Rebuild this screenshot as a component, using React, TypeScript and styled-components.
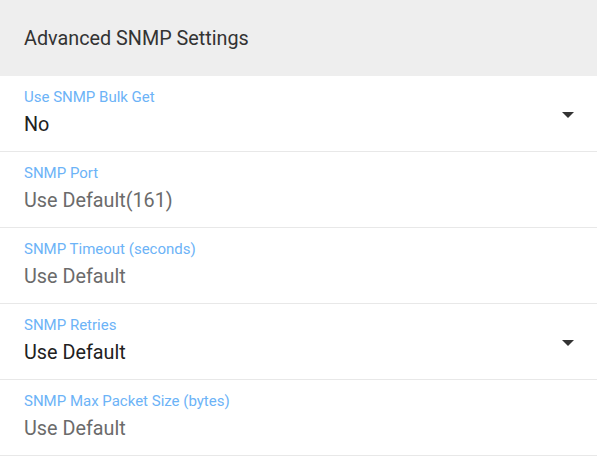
import styled, { createGlobalStyle } from "styled-components";

const GlobalStyle = createGlobalStyle`
  html, body {
    margin: 0;
    padding: 0;
    background: #ffffff;
    font-family: Roboto, "Liberation Sans", Arial, sans-serif;
  }
`;

const Panel = styled.section`
  width: 597px;
  height: 456px;
  overflow: hidden;
  background: #ffffff;
`;

const Header = styled.header`
  height: 76px;
  background: #eeeeee;
  display: flex;
  align-items: center;
  padding: 0 24px;
  box-sizing: border-box;
`;

const Title = styled.h2`
  margin: 0;
  font-size: 19.8px;
  font-weight: 400;
  color: #333333;
`;

const Field = styled.div`
  position: relative;
  height: 76px;
  box-sizing: border-box;
  padding: 13px 24px 0;
  border-bottom: 1px solid #e8e8e8;
  display: flex;
  flex-direction: column;
`;

const Label = styled.label`
  font-size: 15px;
  line-height: 16px;
  color: #6cb3f7;
`;

const Value = styled.div<{ $muted?: boolean }>`
  margin-top: 8px;
  font-size: 19.8px;
  line-height: 24px;
  color: ${({ $muted }) => ($muted ? "#6b6b6b" : "#212121")};
`;

const Caret = styled.span`
  position: absolute;
  right: 23px;
  top: 36px;
  width: 0;
  height: 0;
  border-left: 6px solid transparent;
  border-right: 6px solid transparent;
  border-top: 6px solid #333333;
`;

type Row = { label: string; value: string; select?: boolean };

const rows: Row[] = [
  { label: "Use SNMP Bulk Get", value: "No", select: true },
  { label: "SNMP Port", value: "Use Default(161)" },
  { label: "SNMP Timeout (seconds)", value: "Use Default" },
  { label: "SNMP Retries", value: "Use Default", select: true },
  { label: "SNMP Max Packet Size (bytes)", value: "Use Default" },
];

export default function App() {
  return (
    <>
      <GlobalStyle />
      <Panel>
        <Header>
          <Title>Advanced SNMP Settings</Title>
        </Header>
        {rows.map((row) => (
          <Field key={row.label}>
            <Label>{row.label}</Label>
            <Value $muted={!row.select}>{row.value}</Value>
            {row.select && <Caret />}
          </Field>
        ))}
      </Panel>
    </>
  );
}
